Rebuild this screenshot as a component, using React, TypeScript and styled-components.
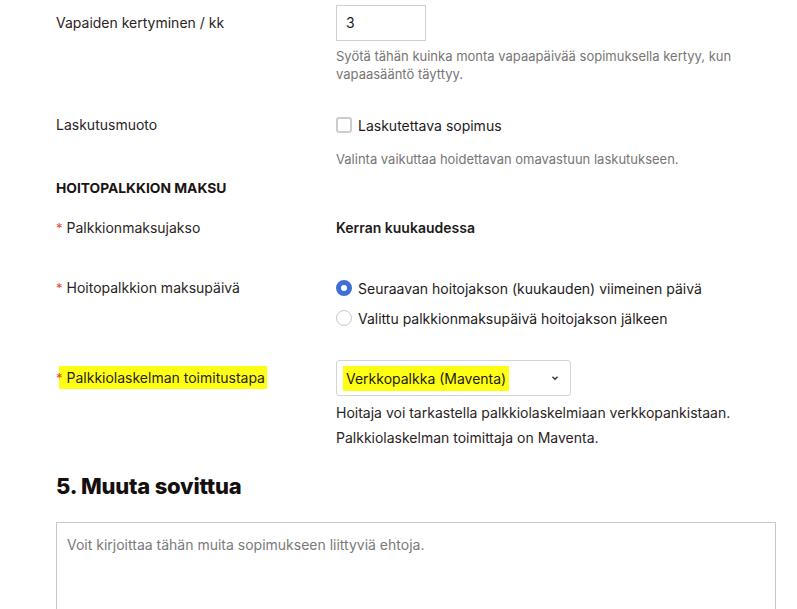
import React from 'react'
import styled, { createGlobalStyle } from 'styled-components'

const Global = createGlobalStyle`
  body {
    margin: 0;
    background: #fff;
    font-family: Inter, 'Noto Sans', sans-serif;
    color: #1e1a1a;
  }
`

const Page = styled.div`
  padding: 5px 21px 0 56px;
`

const Row = styled.div<{ $top?: number }>`
  display: grid;
  grid-template-columns: 280px 1fr;
  margin-top: ${p => p.$top ?? 0}px;
`

const Label = styled.div<{ $h?: number }>`
  font-size: 14px;
  line-height: ${p => p.$h ?? 20}px;
  color: #2b2424;
`

const Req = styled.span`
  color: #e2483a;
  font-size: 13px;
  margin-right: 4px;
  position: relative;
  z-index: 1;
`

const Mark = styled.span`
  background: linear-gradient(to right, transparent 3px, #ffff14 3px);
  padding: 3px 2px 3px 0;
`

const Field = styled.div`
  display: flex;
  flex-direction: column;
`

const NumInput = styled.div`
  width: 90px;
  height: 36px;
  box-sizing: border-box;
  border: 1px solid #cfcfcf;
  padding: 0 9px;
  font-size: 14px;
  line-height: 34px;
`

const Help = styled.p<{ $top?: number }>`
  margin: ${p => p.$top ?? 6}px 0 0;
  font-size: 13px;
  line-height: 18px;
  color: #767676;
`

const Info = styled.p`
  margin: 4px 0 0;
  font-size: 14px;
  line-height: 25px;
  color: #2b2424;
`

const Choice = styled.label<{ $top?: number }>`
  display: flex;
  align-items: center;
  gap: 6px;
  margin-top: ${p => p.$top ?? 0}px;
  font-size: 14px;
  height: 24px;
  color: #1e1a1a;
`

const Box = styled.span`
  width: 16px;
  height: 16px;
  box-sizing: border-box;
  border: 2px solid #cdcdcd;
  border-radius: 3px;
`

const Radio = styled.span<{ $on?: boolean }>`
  width: 16px;
  height: 16px;
  box-sizing: border-box;
  border-radius: 50%;
  border: ${p => (p.$on ? '5px solid #3d6fd6' : '1.5px solid #c8c8c8')};
  background: #fff;
`

const SectionTitle = styled.div<{ $top?: number }>`
  margin-top: ${p => p.$top ?? 0}px;
  font-size: 13.8px;
  font-weight: 700;
  line-height: 20px;
  color: #1a1414;
`

const Strong = styled.div`
  font-size: 14px;
  font-weight: 600;
  line-height: 20px;
`

const Select = styled.div`
  width: 235px;
  height: 36px;
  box-sizing: border-box;
  border: 1px solid #d4d4d4;
  border-radius: 3px;
  display: flex;
  align-items: center;
  justify-content: space-between;
  padding: 0 11px 0 6px;
  font-size: 14px;
`

const SelectMark = styled.span`
  background: #ffff14;
  padding: 4px 3px;
`

const Heading = styled.h2`
  margin: 21px 0 0;
  font-size: 22px;
  font-weight: 800;
  line-height: 30px;
  color: #160f0f;
  letter-spacing: -0.2px;
`

const TextArea = styled.div`
  margin-top: 21px;
  height: 120px;
  box-sizing: border-box;
  border: 1px solid #c9c9c9;
  border-bottom: none;
  padding: 12px 10px;
  font-size: 14px;
  line-height: 20px;
  color: #7a7a7a;
`

const Chevron = () => (
  <svg width="8" height="6" viewBox="0 0 8 6">
    <path d="M1.5 1.8 L4 4.2 L6.5 1.8" fill="none" stroke="#333" strokeWidth="1.4" />
  </svg>
)

export default function App() {
  return (
    <>
      <Global />
      <Page>
        <Row>
          <Label $h={36}>Vapaiden kertyminen / kk</Label>
          <Field>
            <NumInput>3</NumInput>
            <Help>
              Syötä tähän kuinka monta vapaapäivää sopimuksella kertyy, kun
              <br />
              vapaasääntö täyttyy.
            </Help>
          </Field>
        </Row>

        <Row $top={30}>
          <Label $h={24}>Laskutusmuoto</Label>
          <Field>
            <Choice>
              <Box />
              Laskutettava sopimus
            </Choice>
            <Help $top={13}>Valinta vaikuttaa hoidettavan omavastuun laskutukseen.</Help>
          </Field>
        </Row>

        <SectionTitle $top={10}>HOITOPALKKION MAKSU</SectionTitle>

        <Row $top={20}>
          <Label>
            <Req>*</Req>Palkkionmaksujakso
          </Label>
          <Strong>Kerran kuukaudessa</Strong>
        </Row>

        <Row $top={38}>
          <Label $h={24}>
            <Req>*</Req>Hoitopalkkion maksupäivä
          </Label>
          <Field>
            <Choice>
              <Radio $on />
              Seuraavan hoitojakson (kuukauden) viimeinen päivä
            </Choice>
            <Choice $top={6}>
              <Radio />
              Valittu palkkionmaksupäivä hoitojakson jälkeen
            </Choice>
          </Field>
        </Row>

        <Row $top={30}>
          <Label $h={36}>
            <Mark>
              <Req>*</Req>Palkkiolaskelman toimitustapa
            </Mark>
          </Label>
          <Field>
            <Select>
              <SelectMark>Verkkopalkka (Maventa)</SelectMark>
              <Chevron />
            </Select>
            <Info>
              Hoitaja voi tarkastella palkkiolaskelmiaan verkkopankistaan.
              <br />
              Palkkiolaskelman toimittaja on Maventa.
            </Info>
          </Field>
        </Row>

        <Heading>5. Muuta sovittua</Heading>
        <TextArea>Voit kirjoittaa tähän muita sopimukseen liittyviä ehtoja.</TextArea>
      </Page>
    </>
  )
}
